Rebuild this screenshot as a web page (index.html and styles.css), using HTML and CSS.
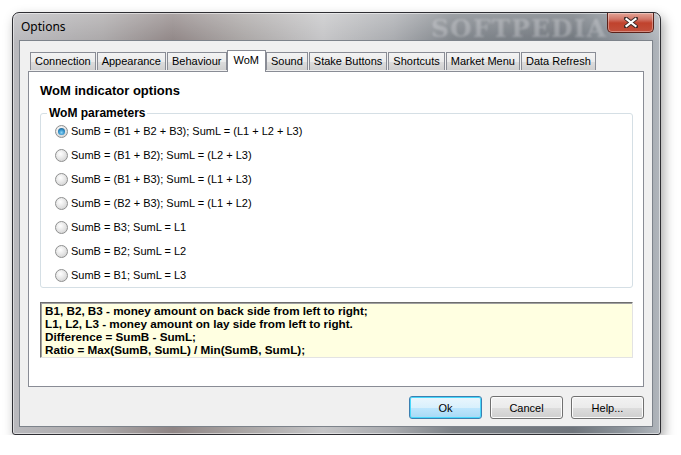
FILE: index.html
```html
<!DOCTYPE html>
<html>
<head>
  <meta charset="UTF-8" />
  <title>Options</title>
  <link rel="stylesheet" href="styles.css">
</head>
<body>
  <div class="window">
    <div class="titlebar">
      <span class="title">Options</span>
      <span class="mark">SOFTPEDIA</span>
      <button class="close" title="Close">
        <svg width="14" height="11" viewBox="0 0 14 11">
          <path d="M2 1.5 L12 9.5 M12 1.5 L2 9.5" stroke="#3a2a28" stroke-width="4" stroke-linecap="square"/>
          <path d="M2.5 2 L11.5 9 M11.5 2 L2.5 9" stroke="#ffffff" stroke-width="2.2" stroke-linecap="square"/>
        </svg>
      </button>
    </div>

    <div class="client">
      <div class="tabs">
        <div class="tab">Connection</div>
        <div class="tab">Appearance</div>
        <div class="tab">Behaviour</div>
        <div class="tab active">WoM</div>
        <div class="tab">Sound</div>
        <div class="tab">Stake Buttons</div>
        <div class="tab">Shortcuts</div>
        <div class="tab">Market Menu</div>
        <div class="tab">Data Refresh</div>
      </div>

      <div class="panel">
        <h1 class="heading">WoM indicator options</h1>
        <fieldset class="group">
          <legend>WoM parameters</legend>
          <label class="opt"><input type="radio" name="wom" checked><span>SumB = (B1 + B2 + B3); SumL = (L1 + L2 + L3)</span></label>
          <label class="opt"><input type="radio" name="wom"><span>SumB = (B1 + B2); SumL = (L2 + L3)</span></label>
          <label class="opt"><input type="radio" name="wom"><span>SumB = (B1 + B3); SumL = (L1 + L3)</span></label>
          <label class="opt"><input type="radio" name="wom"><span>SumB = (B2 + B3); SumL = (L1 + L2)</span></label>
          <label class="opt"><input type="radio" name="wom"><span>SumB = B3; SumL = L1</span></label>
          <label class="opt"><input type="radio" name="wom"><span>SumB = B2; SumL = L2</span></label>
          <label class="opt"><input type="radio" name="wom"><span>SumB = B1; SumL = L3</span></label>
        </fieldset>

        <div class="note">
          B1, B2, B3 - money amount on back side from left to right;<br>
          L1, L2, L3 - money amount on lay side from left to right.<br>
          Difference = SumB - SumL;<br>
          Ratio = Max(SumB, SumL) / Min(SumB, SumL);
        </div>
      </div>

      <div class="buttons">
        <button class="btn default">Ok</button>
        <button class="btn">Cancel</button>
        <button class="btn">Help...</button>
      </div>
    </div>
  </div>
</body>
</html>
```

FILE: styles.css
```css
* { box-sizing: border-box; }
body { margin: 0; background: #ffffff; font-family: "Liberation Sans", Arial, sans-serif; font-size: 11px; color: #000; }

.window {
  margin: 12px 0 0 12px;
  width: 649px;
  height: 423px;
  border: 1px solid #2e2e33;
  border-radius: 7px 7px 3px 3px;
  padding: 0 7px 7px 6px;
  display: flex;
  flex-direction: column;
  background:
    linear-gradient(180deg, rgba(255,255,255,0.25) 0px, rgba(255,255,255,0) 30px),
    linear-gradient(90deg, #b9b9bd 0px, #aaa7a8 90px, #8f8585 160px, #a9a5a4 230px, #c4c4c6 310px, #a8aaae 380px, #7d8288 440px, #6e747b 560px, #8c939a 610px, #b2b7bd 648px);
  box-shadow: 0 0 0 1px rgba(255,255,255,0.5) inset, 3px 5px 12px rgba(0,0,0,0.35);
}

.titlebar { height: 27px; flex: none; display: flex; align-items: center; position: relative; }
.title { font-family: "Noto Sans", sans-serif; font-size: 12px; color: #000; margin-left: 2px; margin-top: -1px; }
.mark {
  position: absolute; left: 412px; top: 1px;
  font-family: "DejaVu Serif", serif; font-weight: bold; font-size: 25px; letter-spacing: 1px;
  color: rgba(235,235,238,0.3); filter: blur(1px);
}
.close {
  position: absolute; right: -1px; top: 0;
  width: 47px; height: 20px; padding: 0;
  border: 1px solid #5b2119; border-top: none;
  border-radius: 0 0 5px 5px;
  background: linear-gradient(180deg, #e3a497 0px, #d2786a 6px, #c0422d 10px, #c2503c 19px);
  box-shadow: 0 0 0 1px rgba(255,255,255,0.35) inset;
  display: flex; align-items: center; justify-content: center;
}

.client {
  flex: 1;
  background: #f0f0f0;
  border: 1px solid #7d838b;
  padding: 9px 8px 0 8px;
}

.tabs { display: flex; align-items: flex-end; height: 21px; margin-left: 2px; position: relative; z-index: 1; }
.tab {
  height: 18px; line-height: 17px;
  padding: 0 4px;
  margin-right: 1px;
  border: 1px solid #898c95; border-bottom: none;
  background: linear-gradient(180deg, #f3f3f3 0%, #ebebeb 50%, #dddddd 51%, #cfcfcf 100%);
  margin-bottom: 1px;
}
.tab.active {
  height: 22px; line-height: 18px;
  margin: 0 0 -1px -1px; padding: 0 6px;
  background: #ffffff;
}

.panel {
  height: 316px;
  border: 1px solid #898c95;
  background: #ffffff;
  padding: 0 10px 0 11px;
}
.heading { margin: 11px 0 8px 0; font-size: 13px; line-height: 16px; font-weight: bold; }

.group {
  margin: 0; padding: 0 0 0 6px;
  border: 1px solid #d5dfe5; border-radius: 3px;
}
.group legend { padding: 0 2px; font-weight: bold; font-size: 12px; line-height: 12px; }

.opt { display: flex; align-items: center; height: 24px; padding-left: 8px; }
.opt input {
  appearance: none; -webkit-appearance: none;
  width: 13px; height: 13px; margin: 0 3px 0 0;
  border: 1px solid #8e8f8f; border-radius: 50%;
  background: radial-gradient(circle at 40% 35%, #ffffff 0%, #e8e8e8 45%, #c9c9c9 100%);
  position: relative;
}
.opt input:checked::after {
  content: ""; position: absolute; left: 2px; top: 2px;
  width: 7px; height: 7px; border-radius: 50%;
  background: radial-gradient(circle at 50% 65%, #8fd6f8 0%, #2f8dc5 50%, #164a73 100%);
}

.note {
  margin-top: 14px;
  height: 56px;
  padding: 1px 4px 0 4px;
  background: #ffffe1;
  border: 1px solid; border-color: #6e6e6e #e3e3e3 #e3e3e3 #6e6e6e;
  box-shadow: 1px 1px 0 #a0a0a0 inset;
  font-size: 11.7px; font-weight: bold; line-height: 13px;
}

.buttons { display: flex; justify-content: flex-end; gap: 8px; margin-top: 9px; }
.btn {
  width: 73px; height: 23px; padding: 0;
  font-family: "Liberation Sans", Arial, sans-serif; font-size: 11px;
  border: 1px solid #707070; border-radius: 3px;
  background: linear-gradient(180deg, #f2f2f2 0%, #ebebeb 50%, #dddddd 51%, #cfcfcf 100%);
  box-shadow: 0 0 0 1px #fcfcfc inset;
}
.btn.default {
  border-color: #3c7fb1;
  background: linear-gradient(180deg, #eaf6fd 0%, #d9f0fc 50%, #bee6fd 51%, #a7d9f5 100%);
  box-shadow: 0 0 0 1px #48d8fb inset;
}
```
